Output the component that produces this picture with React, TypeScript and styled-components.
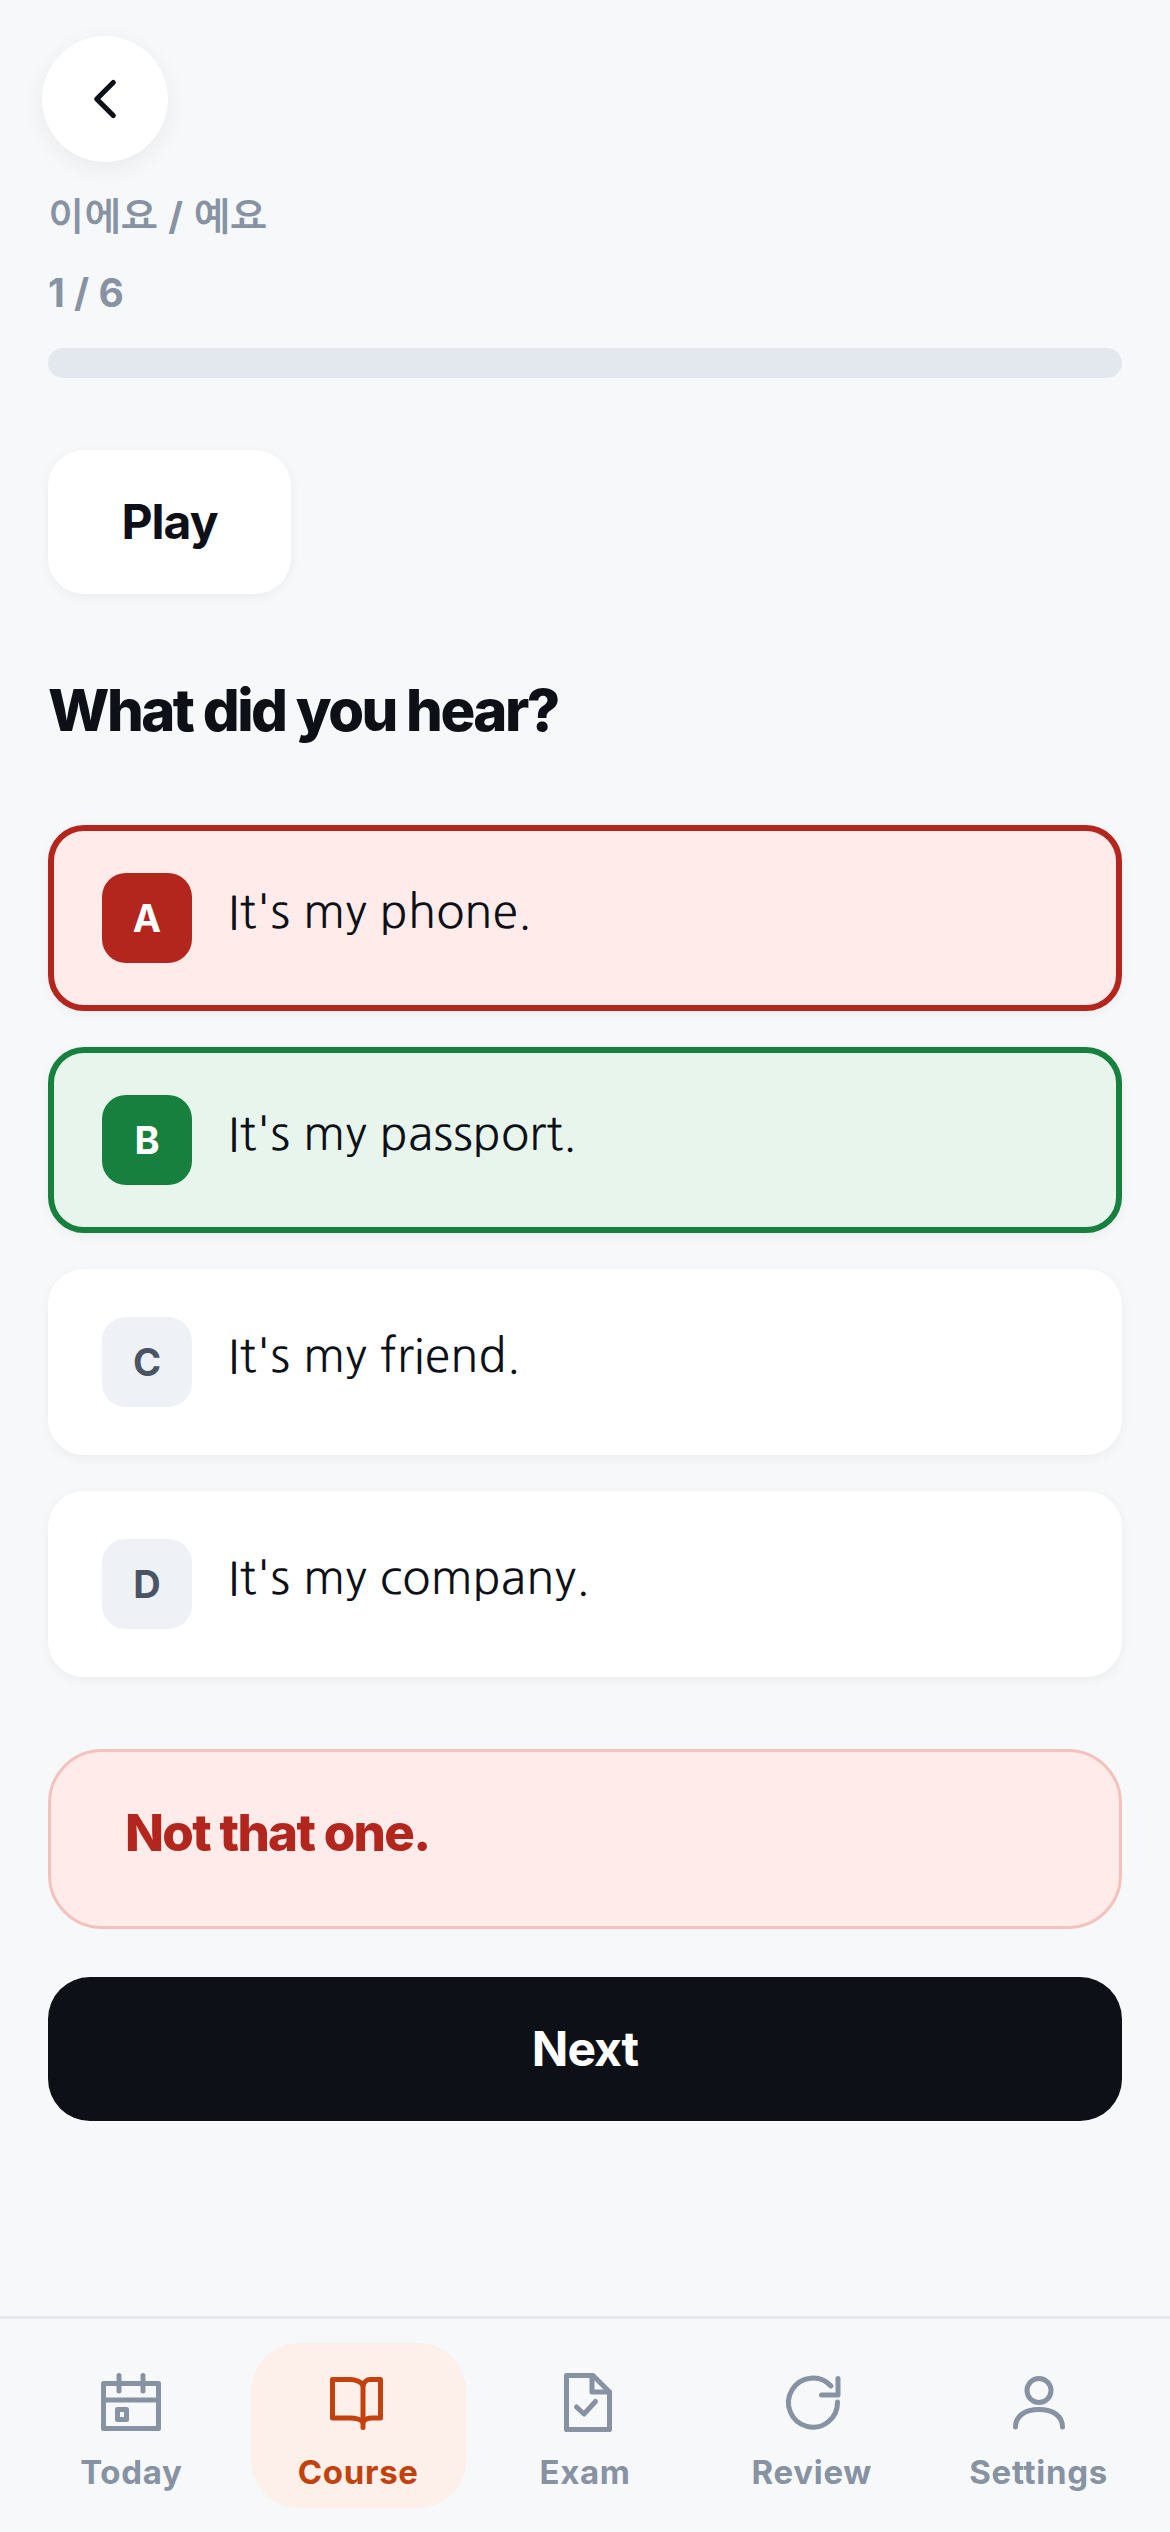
import React from "react";
import styled, { createGlobalStyle } from "styled-components";

const Global = createGlobalStyle`
  html, body { margin: 0; padding: 0; background: #f6f8fa; }
  * { box-sizing: border-box; }
  body { font-family: Inter, NanumGothic, sans-serif; }
`;

const Screen = styled.div`
  width: 1170px;
  height: 2532px;
  display: flex;
  flex-direction: column;
  background: #f6f8fa;
  overflow: hidden;
`;
const Main = styled.main`
  flex: 1;
  display: flex;
  flex-direction: column;
  padding: 36px 48px 0;
`;
const BackButton = styled.button`
  width: 126px;
  height: 126px;
  margin-left: -6px;
  border: none;
  border-radius: 50%;
  background: #fff;
  box-shadow: 0 6px 24px rgba(13, 17, 23, 0.06);
  display: flex;
  align-items: center;
  justify-content: center;
  color: #0d1017;
  padding: 0;
`;
const Topic = styled.div`
  margin-top: 27px;
  font-size: 38px;
  line-height: 54px;
  font-weight: 700;
  letter-spacing: 1px;
  color: #8793a3;
  font-family: Inter, NanumGothic, sans-serif;
`;
const Count = styled.div`
  margin-top: 23px;
  font-size: 39px;
  line-height: 54px;
  font-weight: 700;
  color: #8793a3;
`;
const Track = styled.div`
  margin-top: 28px;
  height: 30px;
  border-radius: 15px;
  background: #e3e8ef;
`;
const PlayButton = styled.button`
  margin-top: 72px;
  width: 243px;
  height: 144px;
  border: none;
  border-radius: 36px;
  background: #fff;
  box-shadow: 0 3px 12px rgba(13, 17, 23, 0.05);
  font: 700 48px/1 Inter, sans-serif;
  letter-spacing: -0.96px;
  color: #0d1017;
`;
const Question = styled.h1`
  margin: 80px 0 0;
  font-size: 58px;
  line-height: 72px;
  font-weight: 800;
  letter-spacing: -2.5px;
  color: #0d1017;
`;
const Options = styled.div`
  margin-top: 79px;
  display: flex;
  flex-direction: column;
  gap: 36px;
`;
const tones = {
  wrong: { bg: "#ffecea", border: "#b3261e", badge: "#b3261e", letter: "#fff" },
  right: { bg: "#e8f5ec", border: "#18803e", badge: "#18803e", letter: "#fff" },
  idle: { bg: "#fff", border: "#fff", badge: "#eef1f6", letter: "#4a5464" },
};
type Tone = keyof typeof tones;
const OptionCard = styled.div<{ $tone: Tone }>`
  height: 186px;
  border: 6px solid ${(p) => tones[p.$tone].border};
  border-radius: 36px;
  background: ${(p) => tones[p.$tone].bg};
  box-shadow: 0 3px 12px rgba(13, 17, 23, 0.05);
  padding: 42px 48px;
  display: flex;
  gap: 36px;
  align-items: flex-start;
`;
const Badge = styled.div<{ $tone: Tone }>`
  width: 90px;
  height: 90px;
  flex: none;
  border-radius: 24px;
  background: ${(p) => tones[p.$tone].badge};
  color: ${(p) => tones[p.$tone].letter};
  display: flex;
  align-items: center;
  justify-content: center;
  font: 700 38px/1 Inter, sans-serif;
`;
const OptionText = styled.div`
  padding-top: 3px;
  font: 400 46.5px/72px NanumGothic, "Noto Sans", sans-serif;
  text-rendering: geometricPrecision;
  color: #0d1017;
`;
const Feedback = styled.div`
  margin-top: 72px;
  height: 180px;
  border: 3px solid #f4c2bd;
  border-radius: 54px;
  background: #ffecea;
  padding: 45px 74px;
  font-size: 51px;
  line-height: 72px;
  font-weight: 800;
  letter-spacing: -1.7px;
  color: #b3261e;
`;
const NextButton = styled.button`
  margin-top: 48px;
  height: 144px;
  border: none;
  border-radius: 42px;
  background: #0d1017;
  color: #fff;
  font: 700 48px/1 Inter, sans-serif;
  letter-spacing: -0.96px;
`;
const Nav = styled.nav`
  flex: none;
  height: 216px;
  border-top: 3px solid #e6e9f0;
  padding: 24px;
  display: grid;
  grid-template-columns: repeat(5, 1fr);
  gap: 12px;
`;
const NavItem = styled.div<{ $active?: boolean }>`
  height: 165px;
  border-radius: 48px;
  background: ${(p) => (p.$active ? "#fdf0ea" : "transparent")};
  color: ${(p) => (p.$active ? "#c2410c" : "#8793a3")};
  display: flex;
  flex-direction: column;
  align-items: center;
  padding-top: 23px;
  gap: 10px;
`;
const NavLabel = styled.span`
  font-size: 33px;
  line-height: 48px;
  font-weight: 700;
  letter-spacing: 0.7px;
`;

const Icon = ({ children }: { children: React.ReactNode }) => (
  <svg width="72" height="72" viewBox="0 0 72 72" fill="none" stroke="currentColor" strokeWidth="5" strokeLinecap="round" strokeLinejoin="round">
    {children}
  </svg>
);

const navs = [
  {
    label: "Today",
    icon: (
      <>
        <path d="M8.500 17.500H63.500V62.500H8.500Z" />
        <path d="M8.500 34H63.500" />
        <path d="M24 9.500V25M48 9.500V25" />
        <rect x="22.500" y="43.500" width="9" height="10" />
      </>
    ),
  },
  {
    label: "Course",
    active: true,
    icon: (
      <>
        <path d="M41 19C38 15 34 13.500 28 13.500H10.500V52H28C34 52 38 53 41 56" />
        <path d="M41 19C42 16 45 13.500 48 13.500H58.500V52H50C46 52 43 53 41 56" />
        <path d="M41 19V61.500" />
      </>
    ),
  },
  {
    label: "Exam",
    icon: (
      <>
        <path d="M17.500 9.500H44L60.500 26V63.500H17.500Z" />
        <path d="M43 9.500V26H60.500" />
        <path d="M27.500 41L35 48L46.500 35.500" />
      </>
    ),
  },
  {
    label: "Review",
    icon: (
      <>
        <path d="M61.500 36A24.500 24.500 0 1 1 55 20" />
        <path d="M62 12.500V29H45.500" />
      </>
    ),
  },
  {
    label: "Settings",
    icon: (
      <>
        <circle cx="36" cy="24.500" r="12" />
        <path d="M12.500 61C12.500 50 22 43.500 36 43.500S59.500 50 59.500 61" />
      </>
    ),
  },
];

const options: { l: string; t: string; tone: Tone }[] = [
  { l: "A", t: "It's my phone.", tone: "wrong" },
  { l: "B", t: "It's my passport.", tone: "right" },
  { l: "C", t: "It's my friend.", tone: "idle" },
  { l: "D", t: "It's my company.", tone: "idle" },
];

export default function App() {
  return (
    <Screen>
      <Global />
      <Main>
        <BackButton aria-label="Back">
          <svg width="66" height="66" viewBox="0 0 24 24" fill="none" stroke="currentColor" strokeWidth="1.900" strokeLinecap="round" strokeLinejoin="round">
            <path d="m15 6-6 6 6 6" />
          </svg>
        </BackButton>
        <Topic>이에요 / 예요</Topic>
        <Count>1 / 6</Count>
        <Track />
        <PlayButton>Play</PlayButton>
        <Question>What did you hear?</Question>
        <Options>
          {options.map((o) => (
            <OptionCard key={o.l} $tone={o.tone}>
              <Badge $tone={o.tone}>{o.l}</Badge>
              <OptionText>{o.t}</OptionText>
            </OptionCard>
          ))}
        </Options>
        <Feedback>Not that one.</Feedback>
        <NextButton>Next</NextButton>
      </Main>
      <Nav>
        {navs.map((n) => (
          <NavItem key={n.label} $active={n.active}>
            <Icon>{n.icon}</Icon>
            <NavLabel>{n.label}</NavLabel>
          </NavItem>
        ))}
      </Nav>
    </Screen>
  );
}
